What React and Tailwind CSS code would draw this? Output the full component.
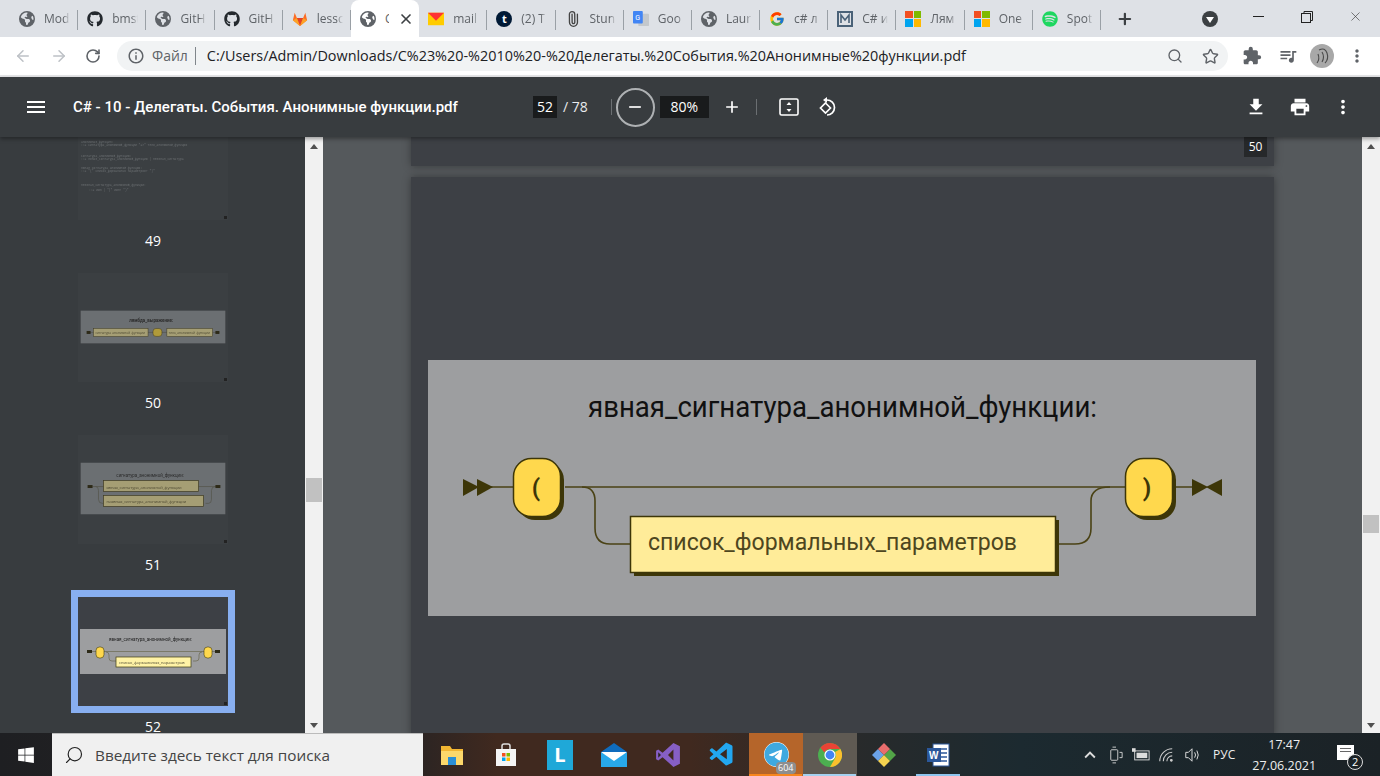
import { FaEarthAmericas, FaGithub, FaSpotify, FaWindows, FaTelegram } from 'react-icons/fa6'
import { FcGoogle } from 'react-icons/fc'
import { VscVscode } from 'react-icons/vsc'
import {
  MdMenu, MdFileDownload, MdPrint, MdMoreVert, MdRemove, MdAdd, MdExtension, MdQueueMusic,
  MdKeyboardArrowUp, MdOutlineInfo,
} from 'react-icons/md'
import { ArrowLeft, ArrowRight, RotateCw, Search, Star, Plus, X, Paperclip } from 'lucide-react'

function Globe() {
  return <FaEarthAmericas className="text-[#5f6368] w-4 h-4" />
}

function GitLab() {
  return (
    <svg viewBox="0 0 18 18" className="w-[18px] h-[18px]">
      <polygon points="9,17 1,10.5 3,2 5.5,8 12.5,8 15,2 17,10.5" fill="#fc6d26" />
      <polygon points="9,17 5.5,8 12.5,8" fill="#e24329" />
      <polygon points="9,17 1,10.5 5.5,8" fill="#fca326" />
      <polygon points="9,17 17,10.5 12.5,8" fill="#fca326" />
    </svg>
  )
}

function YaMail() {
  return (
    <svg viewBox="0 0 18 14" className="w-[18px] h-[14px]">
      <rect width="18" height="14" fill="#ffcc00" />
      <polygon points="0,0 18,0 9,9" fill="#f33" />
    </svg>
  )
}

function Tumblr() {
  return (
    <div className="w-4 h-4 rounded-full bg-[#001935] flex items-center justify-center text-white text-[11px] font-bold leading-none">
      t
    </div>
  )
}

function Translate() {
  return (
    <svg viewBox="0 0 18 18" className="w-4 h-4">
      <rect x="6" y="3" width="12" height="14" rx="1" fill="#c4c8cc" />
      <rect x="0" y="0" width="11" height="14" rx="1" fill="#4285f4" />
      <text x="2.5" y="10" fontSize="8" fill="#fff" fontFamily="Roboto, sans-serif">G</text>
    </svg>
  )
}

function MBox() {
  return (
    <svg viewBox="0 0 16 16" className="w-4 h-4">
      <rect x="1" y="1" width="14" height="14" fill="none" stroke="#4a6278" strokeWidth="2" />
      <path d="M4 12V4l4 5 4-5v8" fill="none" stroke="#4a6278" strokeWidth="1.6" />
    </svg>
  )
}

function MsLogo({ size = 'w-4 h-4' }) {
  return (
    <div className={`${size} grid grid-cols-2 gap-[1px]`}>
      <div className="bg-[#f25022]" />
      <div className="bg-[#7fba00]" />
      <div className="bg-[#00a4ef]" />
      <div className="bg-[#ffb900]" />
    </div>
  )
}

const tabs = [
  { icon: <Globe />, title: 'Mod' },
  { icon: <FaGithub className="w-4 h-4 text-[#24292e]" />, title: 'bmst' },
  { icon: <Globe />, title: 'GitH' },
  { icon: <FaGithub className="w-4 h-4 text-[#24292e]" />, title: 'GitH' },
  { icon: <GitLab />, title: 'lessc' },
  { icon: <Globe />, title: 'C', active: true },
  { icon: <YaMail />, title: 'mail' },
  { icon: <Tumblr />, title: '(2) T' },
  { icon: <Paperclip className="w-4 h-4 text-[#444] -rotate-45" />, title: 'Stun' },
  { icon: <Translate />, title: 'Goo' },
  { icon: <Globe />, title: 'Laur' },
  { icon: <FcGoogle className="w-4 h-4" />, title: 'c# л' },
  { icon: <MBox />, title: 'C# и' },
  { icon: <MsLogo />, title: 'Лям' },
  { icon: <MsLogo />, title: 'One' },
  { icon: <FaSpotify className="w-4 h-4 text-[#1ed760]" />, title: 'Spot' },
]

function Tab({ tab }) {
  if (tab.active) {
    return (
      <div className="w-[68.2px] h-[37px] bg-white rounded-t-lg flex items-center pl-[9px] gap-[9px] text-xs text-[#5f6368] shrink-0">
        {tab.icon}
        <span className="w-[4px] overflow-hidden">{tab.title}</span>
        <X className="w-4 h-4 text-[#3c4043]" strokeWidth={2.5} />
      </div>
    )
  }
  return (
    <div className="w-[68.2px] h-[37px] flex items-center pl-[9px] gap-[9px] text-xs text-[#5f6368] shrink-0 relative">
      <div className="shrink-0 flex justify-center w-4">{tab.icon}</div>
      <span className="w-[26px] overflow-hidden whitespace-nowrap [mask-image:linear-gradient(90deg,#000_75%,transparent)]">{tab.title}</span>
      <div className="absolute right-0 top-[10px] h-[20px] w-px bg-[#9aa0a6]" />
    </div>
  )
}

function TabStrip() {
  return (
    <div className="h-[37px] bg-[#dee1e6] flex items-center pl-[10px] shrink-0">
      {tabs.map((t, i) => <Tab key={i} tab={t} />)}
      <Plus className="w-[18px] h-[18px] text-[#3c4043] ml-[15px]" strokeWidth={3} />
      <div className="ml-[68px] w-4 h-4 rounded-full bg-[#3c4043] flex items-center justify-center">
        <div className="w-0 h-0 border-x-[4px] border-x-transparent border-t-[6px] border-t-white mt-[2px]" />
      </div>
      <div className="ml-[17px] w-[49px] flex justify-center -mt-[4px]">
        <div className="w-[11px] h-px bg-[#222]" />
      </div>
      <div className="w-[49px] flex justify-center -mt-[4px]">
        <svg viewBox="0 0 12 12" className="w-3 h-3" fill="none" stroke="#222">
          <rect x="0.5" y="2.5" width="9" height="9" />
          <path d="M3 2.5V0.5h8.5v9H9.5" />
        </svg>
      </div>
      <div className="w-[49px] flex justify-center -mt-[4px]">
        <X className="w-[15px] h-[15px] text-[#333]" strokeWidth={1} />
      </div>
    </div>
  )
}

function AddressBar() {
  return (
    <div className="h-[40px] bg-white flex items-center shrink-0 border-b-2 border-b-[#e6e7e9]">
      <ArrowLeft className="w-[18px] h-[18px] text-[#bdc1c6] ml-[14px]" />
      <ArrowRight className="w-[18px] h-[18px] text-[#bdc1c6] ml-[18px]" />
      <RotateCw className="w-4 h-4 text-[#5f6368] ml-[17px]" strokeWidth={2.4} />
      <div className="ml-[16px] w-[1111px] h-[30px] bg-[#f1f3f4] rounded-full flex items-center pl-[10px] text-sm">
        <MdOutlineInfo className="w-[18px] h-[18px] text-[#5f6368]" />
        <span className="ml-[7px] text-[#5f6368]">Файл</span>
        <div className="w-px h-[18px] bg-[#80868b] mx-[7px]" />
        <span className="ml-[4px] w-[770px] whitespace-nowrap text-[#202124] text-[14.4px]">C:/Users/Admin/Downloads/C%23%20-%2010%20-%20Делегаты.%20События.%20Анонимные%20функции.pdf</span>
        <Search className="w-4 h-4 text-[#5f6368] ml-[190px]" />
        <Star className="w-[17px] h-[17px] text-[#5f6368] ml-[19px]" />
      </div>
      <MdExtension className="w-5 h-5 text-[#5f6368] ml-[14px]" />
      <MdQueueMusic className="w-5 h-5 text-[#5f6368] ml-[16px]" />
      <svg viewBox="0 0 24 24" className="w-6 h-6 ml-[12px]">
        <circle cx="12" cy="12" r="12" fill="#a8a8a8" />
        <path d="M9 6q6-3 8 3t-2 10M8 10q2 5-1 9M12 8q3 5 0 10" fill="none" stroke="#4a4a4a" strokeWidth="1.1" />
      </svg>
      <MdMoreVert className="w-5 h-5 text-[#5f6368] ml-[13px]" />
    </div>
  )
}

function PdfToolbar() {
  return (
    <div className="h-[60px] bg-[#383c3f] flex items-center text-white shrink-0 shadow-[0_2px_4px_rgba(0,0,0,0.35)] relative z-10">
      <MdMenu className="w-6 h-6 ml-[24px]" />
      <div className="ml-[25px] w-[460px] text-[15px] font-medium font-[Roboto,sans-serif] whitespace-nowrap">
        C# - 10 - Делегаты. События. Анонимные функции.pdf
      </div>
      <div className="w-[24px] h-[22px] bg-[#191b1c] flex items-center justify-center text-sm">52</div>
      <span className="ml-[6px] text-sm text-[#e8eaed] whitespace-nowrap">/ 78</span>
      <div className="ml-[23px] w-px h-[16px] bg-[#6b6f72]" />
      <div className="ml-[4px] w-[39px] h-[39px] rounded-full border-2 border-[#aeb1b3] flex items-center justify-center">
        <MdRemove className="w-5 h-5" />
      </div>
      <div className="ml-[5px] w-[49px] h-[22px] bg-[#191b1c] flex items-center justify-center text-sm">80%</div>
      <MdAdd className="w-5 h-5 ml-[13px]" />
      <div className="ml-[14px] w-px h-[16px] bg-[#6b6f72]" />
      <svg viewBox="0 0 20 20" className="w-5 h-5 ml-[22px]" fill="none" stroke="#fff" strokeWidth="1.6">
        <rect x="1" y="2" width="18" height="16" rx="1.5" />
        <polygon points="10,5 12.5,8 7.5,8" fill="#fff" stroke="none" />
        <polygon points="10,15 12.5,12 7.5,12" fill="#fff" stroke="none" />
      </svg>
      <svg viewBox="0 0 20 20" className="w-5 h-5 ml-[19px]" fill="none" stroke="#fff" strokeWidth="1.7">
        <path d="M9 3 A7.5 7.5 0 1 1 9 18" />
        <polygon points="9,0 9,6 5,3" fill="#fff" stroke="none" />
        <polygon points="7.5,6 12.5,11 7.5,16 2.5,11" />
      </svg>
      <MdFileDownload className="w-[22px] h-[22px] ml-[407px]" />
      <MdPrint className="w-[22px] h-[22px] ml-[22px]" />
      <MdMoreVert className="w-[22px] h-[22px] ml-[21px]" />
    </div>
  )
}

function ThumbDiagram({ page }) {
  if (page === 49) {
    const lines = [
      ['анонимная_функция:', 0],
      ['  ::= сигнатура_анонимной_функции "=>" тело_анонимной_функции', 3],
      ['сигнатура_анонимной_функции:', 14],
      ['  ::= явная_сигнатура_анонимной_функции | неявная_сигнатура', 14 + 3],
      ['явная_сигнатура_анонимной_функции:', 26],
      ['  ::= "(" список_формальных_параметров? ")"', 29],
    ]
    return (
      <svg viewBox="0 0 150 83" className="w-[150px] h-[83px] block blur-[0.3px]">
        {lines.map(([s, y], i) => (
          <text key={i} x="3" y={y + 6} fontSize="3" fill="#6c7073" fontFamily="Liberation Mono, monospace">{s}</text>
        ))}
        <text x="3" y="49" fontSize="3" fill="#6c7073" fontFamily="Liberation Mono, monospace">неявная_сигнатура_анонимной_функции:</text>
        <text x="11" y="54" fontSize="3" fill="#6c7073" fontFamily="Liberation Mono, monospace">::= имя | "(" имя? ")"</text>
      </svg>
    )
  }
  if (page === 50) {
    return (
      <svg viewBox="0 0 150 110" className="w-[150px] h-[109px] block blur-[0.3px]">
        <rect x="2" y="38" width="146" height="33" fill="#6b6f72" />
        <text x="51" y="49" fontSize="4.5" fontWeight="bold" fill="#2c2c2c" fontFamily="Roboto, sans-serif">лямбда_выражение:</text>
        <path d="M10 60H142" stroke="#54544a" strokeWidth=".6" />
        <rect x="8" y="58.500" width="4" height="3" fill="#2d2a18" />
        <rect x="15" y="56" width="55" height="8" fill="#a59e74" stroke="#3e3a22" strokeWidth=".5" />
        <rect x="75" y="56" width="9" height="8" rx="3" fill="#b09a3a" stroke="#3e3a22" strokeWidth=".5" />
        <rect x="89" y="56" width="46" height="8" fill="#a59e74" stroke="#3e3a22" strokeWidth=".5" />
        <rect x="138" y="58.500" width="4" height="3" fill="#2d2a18" />
        <text x="17" y="61.5" fontSize="3.2" fill="#4a4630">сигнатура_анонимной_функции</text>
        <text x="91" y="61.5" fontSize="3.2" fill="#4a4630">тело_анонимной_функции</text>
      </svg>
    )
  }
  if (page === 51) {
    return (
      <svg viewBox="0 0 150 110" className="w-[150px] h-[109px] block blur-[0.3px]">
        <rect x="2" y="28" width="146" height="52" fill="#6b6f72" />
        <text x="38" y="42" fontSize="4.5" fill="#2c2c2c" fontFamily="Roboto, sans-serif">сигнатура_анонимной_функции:</text>
        <path d="M14 52H142M17 52q3 0 3 4v9q0 4 4 4h1M128 69h3q3 0 3-4v-9q0-4 4-4" fill="none" stroke="#54544a" strokeWidth=".7" />
        <rect x="9" y="50.5" width="5" height="3" fill="#2d2a18" />
        <rect x="138" y="50.5" width="5" height="3" fill="#2d2a18" />
        <rect x="25" y="46" width="96" height="11" fill="#a59e74" stroke="#3e3a22" strokeWidth=".7" />
        <rect x="25" y="61" width="101" height="11" fill="#a59e74" stroke="#3e3a22" strokeWidth=".7" />
        <text x="28" y="54" fontSize="4" fill="#4a4630">явная_сигнатура_анонимной_функции</text>
        <text x="28" y="69" fontSize="4" fill="#4a4630">неявная_сигнатура_анонимной_функции</text>
      </svg>
    )
  }
  return (
    <svg viewBox="0 0 151 110" className="w-[151px] h-[110px] block blur-[0.3px]">
      <rect x="2" y="32" width="146" height="45" fill="#9d9ea0" />
      <text x="31" y="44" fontSize="4.5" fill="#1d1d1d" fontFamily="Roboto, sans-serif">явная_сигнатура_анонимной_функции:</text>
      <path d="M14 54.500H140M28 55q3 0 3 3v3q0 3 3 3h5M115 64h3q3 0 3-3v-3q0-3 3-3" fill="none" stroke="#6c6850" strokeWidth=".7" />
      <rect x="9" y="53" width="5" height="3" fill="#2d2a18" />
      <rect x="137" y="53" width="5" height="3" fill="#2d2a18" />
      <rect x="18" y="50" width="8" height="11" rx="3.5" fill="#ffd84d" stroke="#3e3a10" strokeWidth=".6" />
      <rect x="126" y="50" width="8" height="11" rx="3.5" fill="#ffd84d" stroke="#3e3a10" strokeWidth=".6" />
      <rect x="38" y="60" width="75" height="10" fill="#fff3a6" stroke="#3e3a10" strokeWidth=".7" />
      <text x="41" y="67" fontSize="4" fill="#4a4630">список_формальных_параметров</text>
    </svg>
  )
}

function Thumb({ page, active, partial }) {
  return (
    <div className="w-[150px] flex flex-col items-center">
      <div className={`w-[150px] ${partial ? 'h-[83px]' : 'h-[109px]'} relative ${active ? 'bg-[#3d4045] ring-[7px] ring-[#88aff0]' : 'bg-[#3b3f42]'}`}>
        <ThumbDiagram page={page} />
        <div className="absolute right-[1px] bottom-[1px] w-[3px] h-[3px] bg-[#222]" />
      </div>
      <div className="h-[53px] pt-[12px] text-sm leading-[18px] text-white">{page}</div>
    </div>
  )
}

function ScrollBar({ thumbTop, className }) {
  return (
    <div className={`bg-[#f1f1f1] flex flex-col items-center relative shrink-0 ${className}`}>
      <div className="absolute top-[7px] w-0 h-0 border-x-[4px] border-x-transparent border-b-[5px] border-b-[#505050]" />
      <div className={`absolute left-[1px] right-[1px] bg-[#c1c1c1] ${thumbTop}`} />
      <div className="absolute bottom-[5px] w-0 h-0 border-x-[4px] border-x-transparent border-t-[5px] border-t-[#505050]" />
    </div>
  )
}

function Sidebar() {
  return (
    <div className="w-[305px] bg-[#383c3f] flex flex-col items-center overflow-hidden shrink-0 pl-[1px]">
      <Thumb page={49} partial />
      <Thumb page={50} />
      <Thumb page={51} />
      <Thumb page={52} active />
    </div>
  )
}

function Diagram() {
  const line = '#4a4215'
  return (
    <svg viewBox="428 360 828 256" className="w-[828px] h-[256px] block">
      <rect x="428" y="360" width="828" height="256" fill="#9d9ea0" />
      <text x="588" y="417" fontSize="30" fill="#111" fontFamily="Roboto, sans-serif" textLength="509" lengthAdjust="spacingAndGlyphs">явная_сигнатура_анонимной_функции:</text>
      <path d="M490 487H513M565 487H1125M1176 487H1192" stroke={line} strokeWidth="1.6" />
      <path d="M582 487q13 0 13 14v27q0 16 15 16h20M1059 544h16q16 0 16-16v-27q0-14 19-14" fill="none" stroke={line} strokeWidth="1.6" />
      <polygon points="463,479 479,487 463,496" fill="#3d3608" />
      <polygon points="477,479 493,487 477,496" fill="#3d3608" />
      <polygon points="1192,479 1208,487 1192,496" fill="#3d3608" />
      <polygon points="1222,479 1206,487 1222,496" fill="#3d3608" />
      <rect x="517" y="462" width="47" height="58" rx="18" fill="#3d3608" />
      <rect x="513.5" y="458.5" width="47" height="58" rx="18" fill="#ffd84d" stroke="#3d3608" strokeWidth="1.5" />
      <text x="536" y="496" fontSize="24" fontWeight="bold" textAnchor="middle" fill="#3d3608" fontFamily="Roboto, sans-serif">(</text>
      <rect x="1129" y="462" width="47" height="58" rx="18" fill="#3d3608" />
      <rect x="1125.5" y="458.5" width="47" height="58" rx="18" fill="#ffd84d" stroke="#3d3608" strokeWidth="1.5" />
      <text x="1147" y="496" fontSize="24" fontWeight="bold" textAnchor="middle" fill="#3d3608" fontFamily="Roboto, sans-serif">)</text>
      <rect x="634" y="520" width="425" height="56" fill="#3d3608" />
      <rect x="630.5" y="516.5" width="425" height="56" fill="#ffec99" stroke="#3d3608" strokeWidth="1.5" />
      <text x="648" y="550" fontSize="24" fill="#4d4620" fontFamily="Roboto, sans-serif" textLength="369" lengthAdjust="spacingAndGlyphs">список_формальных_параметров</text>
    </svg>
  )
}

function Viewer() {
  return (
    <div className="flex-1 bg-[#55595c] overflow-hidden pl-[88px]">
      <div className="w-[863px] h-[29px] bg-[#3d4045] shadow-[0_0_8px_rgba(0,0,0,0.35)] relative">
        <div className="absolute right-[7px] top-0 w-[23px] h-[20px] bg-[#26282a] text-white text-xs flex items-center justify-center">50</div>
      </div>
      <div className="mt-[11px] w-[863px] h-[560px] bg-[#3d4045] shadow-[0_0_8px_rgba(0,0,0,0.35)] pt-[183px] pl-[17px]">
        <Diagram />
      </div>
    </div>
  )
}

function Word() {
  return (
    <svg viewBox="0 0 24 24" className="w-6 h-6">
      <rect x="7" y="1" width="16" height="22" fill="#fff" stroke="#2b579a" />
      <path d="M14 6h7M14 10h7M14 14h7M14 18h7" stroke="#2b579a" strokeWidth="1.4" />
      <rect x="1" y="5" width="14" height="14" fill="#2b579a" />
      <text x="3" y="16" fontSize="10" fontWeight="bold" fill="#fff" fontFamily="Liberation Sans, sans-serif">W</text>
    </svg>
  )
}

function ChromeIcon() {
  return (
    <svg viewBox="0 0 24 24" className="w-6 h-6">
      <circle cx="12" cy="12" r="12" fill="#4caf50" />
      <path d="M12 0a12 12 0 0 1 10.4 6H12a6 6 0 0 0-5.5 3.6L2.4 4.7A12 12 0 0 1 12 0z" fill="#ea4335" />
      <path d="M22.4 6A12 12 0 0 1 12 24l5.2-9A6 6 0 0 0 17 9z" fill="#fbc02d" />
      <circle cx="12" cy="12" r="5.6" fill="#fff" />
      <circle cx="12" cy="12" r="4.4" fill="#4285f4" />
    </svg>
  )
}

function TaskIcon({ children, hl, bar }) {
  return (
    <div className={`w-[54px] h-full flex items-center justify-center relative ${hl || ''}`}>
      {children}
      {bar && <div className={`absolute bottom-0 h-[2px] ${bar}`} />}
    </div>
  )
}

function Taskbar() {
  return (
    <div className="h-[43px] shrink-0 flex items-center bg-[linear-gradient(90deg,#1e1f22_0%,#2a2423_30%,#40291f_36%,#40291f_50%,#2a2a2a_60%,#1c2a30_74%,#1b2226_100%)] text-white relative z-10">
      <div className="w-[52px] flex justify-center">
        <FaWindows className="w-[18px] h-[18px]" />
      </div>
      <div className="w-[371px] h-full bg-[#f0f0f0] border-t border-t-[#bbb] flex items-center pl-[12px] text-[#333]">
        <Search className="w-5 h-5 text-[#222] -scale-x-100" strokeWidth={1.4} />
        <span className="ml-[11px] text-[15.3px] text-[#444]">Введите здесь текст для поиска</span>
      </div>
      <div className="flex h-full ml-[2px]">
        <TaskIcon>
          <svg viewBox="0 0 24 24" className="w-6 h-6">
            <path d="M1 3h9l2 3h11v16H1z" fill="#f2b632" />
            <rect x="1" y="8" width="22" height="14" fill="#fcd86b" />
            <rect x="8" y="14" width="8" height="8" fill="#2a8fd6" />
          </svg>
        </TaskIcon>
        <TaskIcon>
          <svg viewBox="0 0 24 24" className="w-6 h-6">
            <path d="M8 6V3q0-2 2-2h4q2 0 2 2v3" fill="none" stroke="#ddd" strokeWidth="1.5" />
            <rect x="2" y="6" width="20" height="17" fill="#f5f5f5" />
            <rect x="8" y="10" width="3.5" height="3.5" fill="#f25022" />
            <rect x="12.5" y="10" width="3.5" height="3.5" fill="#7fba00" />
            <rect x="8" y="14.5" width="3.5" height="3.5" fill="#00a4ef" />
            <rect x="12.5" y="14.5" width="3.5" height="3.5" fill="#ffb900" />
          </svg>
        </TaskIcon>
        <TaskIcon>
          <div className="w-[26px] h-[30px] bg-[#1fa8d8] flex items-center justify-center text-white font-bold text-xl leading-none">L</div>
        </TaskIcon>
        <TaskIcon>
          <svg viewBox="0 0 28 24" className="w-[28px] h-6">
            <path d="M14 0L27 9v15H1V9z" fill="#0f6cbd" />
            <rect x="1" y="10" width="26" height="14" fill="#28a8ea" />
            <path d="M1 9l13 9 13-9" fill="#fff" />
          </svg>
        </TaskIcon>
        <TaskIcon>
          <svg viewBox="0 0 24 24" className="w-[26px] h-[26px]">
            <path d="M17 1l6 3v16l-6 3-10-9-4 3-2-1V8l2-1 4 3zM17 7l-5 5 5 5z" fill="#865fc5" fillRule="evenodd" />
            <path d="M3 9.5v5l2.500-2.500z" fill="#2a2423" />
          </svg>
        </TaskIcon>
        <TaskIcon>
          <VscVscode className="w-[28px] h-[28px] text-[#22a7f0]" />
        </TaskIcon>
        <TaskIcon hl="bg-[#b5652a]" bar="left-0 right-[1px] bg-[#f7861e]">
          <div className="relative">
            <FaTelegram className="w-[25px] h-[25px] text-[#3fa9e0] bg-white rounded-full" />
            <div className="absolute -right-[7px] -bottom-[7px] bg-[#8e8e8e] text-white text-[9px] leading-[12px] px-[2px] rounded-sm">604</div>
          </div>
        </TaskIcon>
        <TaskIcon hl="bg-[#5f5a53]" bar="left-0 right-[1px] bg-[#a5d1f0]">
          <ChromeIcon />
        </TaskIcon>
        <TaskIcon>
          <svg viewBox="0 0 26 26" className="w-[26px] h-[26px]">
            <polygon points="7,7 13,13 7,19 1,13" fill="#6aa2e8" />
            <polygon points="19,7 25,13 19,19 13,13" fill="#52a447" />
            <polygon points="13,13 19,19 13,25 7,19" fill="#f6d34f" />
            <polygon points="13,1 19,7 13,13 7,7" fill="#e96d6d" />
          </svg>
        </TaskIcon>
        <TaskIcon bar="left-[5px] right-[5px] bg-[#8ec5ee]">
          <Word />
        </TaskIcon>
      </div>
      <MdKeyboardArrowUp className="w-[22px] h-[22px] ml-[114px] text-[#ddd]" />
      <svg viewBox="0 0 16 20" className="w-[14px] h-[18px] ml-[8px]" fill="none" stroke="#ddd">
        <rect x="2" y="4" width="8" height="12" rx="1" />
        <path d="M4 1h4M4 19h4M12 7h3v6h-3" />
      </svg>
      <svg viewBox="0 0 20 14" className="w-[18px] h-[13px] ml-[9px]" fill="#ddd">
        <rect x="3" y="3" width="16" height="10" fill="none" stroke="#ddd" />
        <rect x="5" y="5" width="12" height="6" />
        <rect x="0" y="0" width="4" height="4" />
      </svg>
      <svg viewBox="0 0 18 18" className="w-4 h-4 ml-[8px]" fill="none" stroke="#ccc" strokeWidth="1.2">
        <path d="M2 16a14 14 0 0 1 14-14M6 16a10 10 0 0 1 10-10M10 16a6 6 0 0 1 6-6" />
        <circle cx="15" cy="15" r="1" fill="#ccc" />
      </svg>
      <svg viewBox="0 0 18 18" className="w-4 h-4 ml-[10px]" fill="none" stroke="#ddd" strokeWidth="1.1">
        <path d="M2 6h3l4-4v14l-4-4H2zM12 6q2 3 0 6M14.5 4q3 5 0 10" />
      </svg>
      <span className="text-xs ml-[13px] text-[#eee]">РУС</span>
      <div className="ml-[16px] w-[66px] text-center text-[12.5px] leading-[21px] text-[#eee]">
        <div>17:47</div>
        <div>27.06.2021</div>
      </div>
      <div className="ml-[20px] relative w-[20px] h-[20px]">
        <div className="w-[17px] h-[15px] bg-white flex flex-col gap-[2px] px-[3px] pt-[3px]">
          <div className="h-px bg-[#666]" />
          <div className="h-px bg-[#666]" />
        </div>
        <div className="absolute -right-[6px] -bottom-[5px] w-[16px] h-[16px] rounded-full border border-[#ddd] bg-[#1b2226] text-[11px] leading-[14px] text-center">2</div>
      </div>
    </div>
  )
}

export default function App() {
  return (
    <div className="w-[1380px] h-[776px] flex flex-col overflow-hidden font-['Open_Sans',sans-serif]">
      <TabStrip />
      <AddressBar />
      <PdfToolbar />
      <div className="flex-1 flex min-h-0">
        <Sidebar />
        <ScrollBar className="w-[18px]" thumbTop="top-[341px] h-[24px]" />
        <Viewer />
        <ScrollBar className="w-[18px]" thumbTop="top-[378px] h-[18px]" />
      </div>
      <Taskbar />
    </div>
  )
}
